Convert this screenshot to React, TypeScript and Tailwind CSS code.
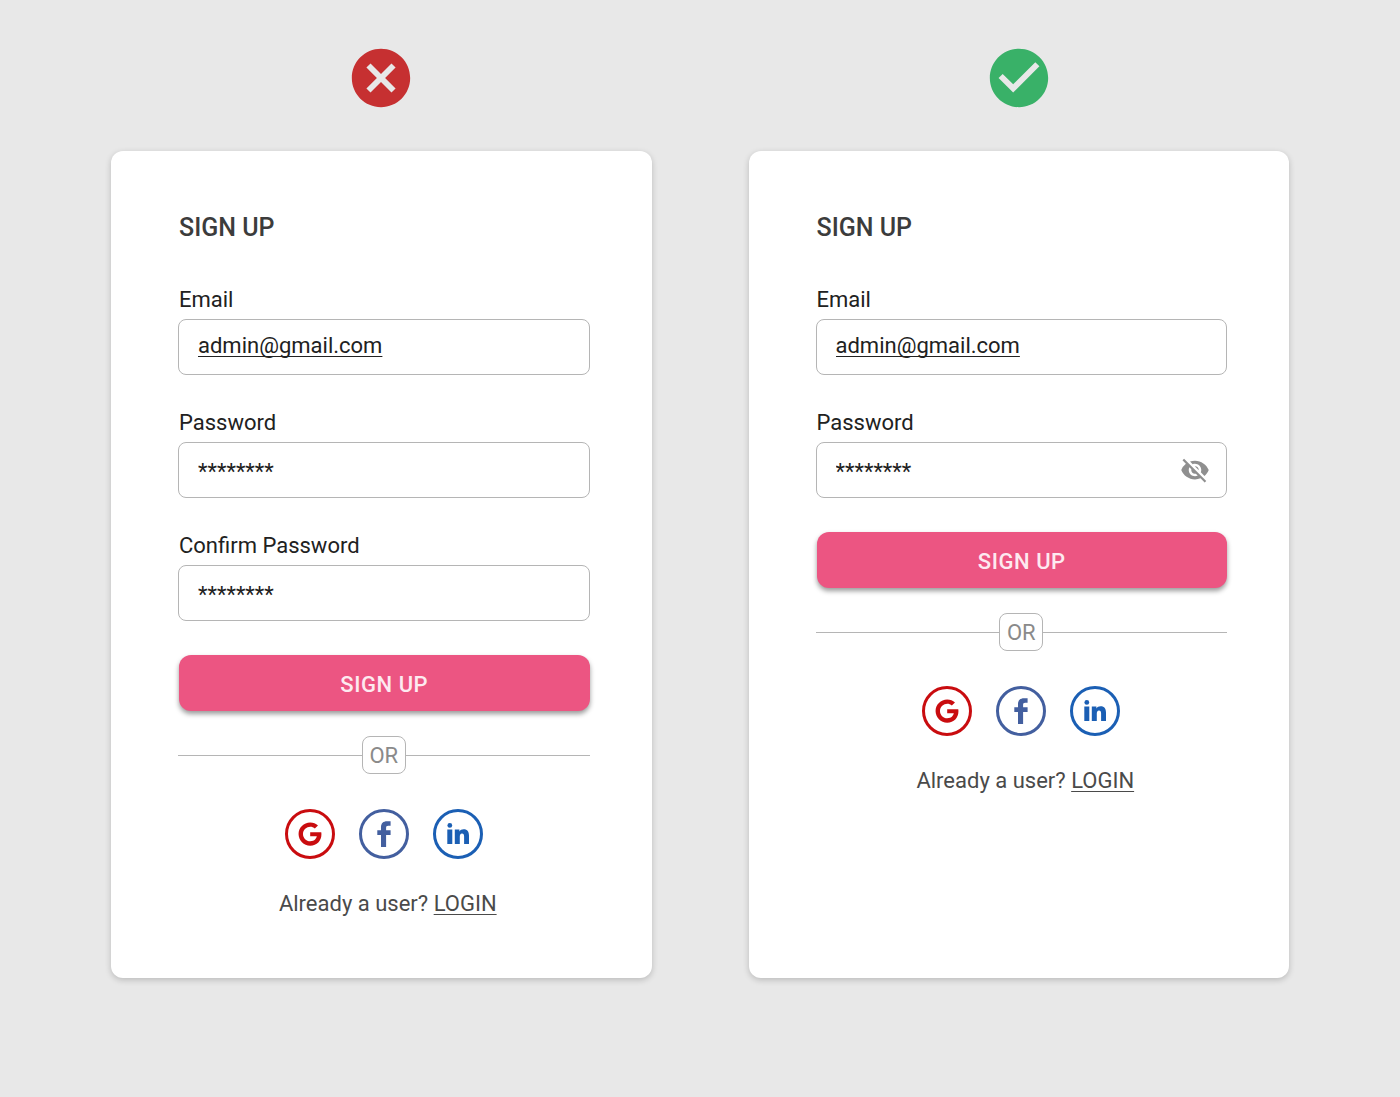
import { useId } from "react";
import { FaGoogle } from "react-icons/fa";
import { MdCancel, MdCheckCircle, MdVisibilityOff } from "react-icons/md";

type FieldProps = {
  label: string;
  value: string;
  type?: "text" | "email";
  hasToggle?: boolean;
};

function Field({ label, value, type = "text", hasToggle = false }: FieldProps) {
  const id = useId();

  return (
    <div>
      <label htmlFor={id} className="block pl-px text-[22px] leading-7 text-[#212121]">
        {label}
      </label>
      <div className="mt-[5px] flex h-14 items-center rounded-lg border border-[#b5b5b5] bg-white pl-[19px] pr-4">
        <input
          id={id}
          type={type}
          defaultValue={value}
          autoComplete="off"
          spellCheck={false}
          className={
            type === "email"
              ? "min-w-0 flex-1 pb-0.5 text-[22px] leading-7 text-[#212121] underline decoration-1 underline-offset-3 outline-none [text-decoration-skip-ink:none]"
              : "min-w-0 flex-1 pt-1 text-[22px] leading-7 text-[#212121] outline-none"
          }
        />
        {hasToggle ? (
          <button type="button" aria-label="Show password" className="text-[#8f8f8f]">
            <MdVisibilityOff size={30} />
          </button>
        ) : null}
      </div>
    </div>
  );
}

function FacebookMark() {
  return (
    <svg viewBox="0 0 14 26" className="h-[26px] w-3.5" fill="currentColor" aria-hidden="true">
      <path d="M4 26V14H.3V9.200H4v-3C4 2.200 6.200.2 10 .2h3.600v4.600h-2.400c-1.600 0-2.100.7-2.100 2.100v2.300h4.500V14H9.100v12z" />
    </svg>
  );
}

function LinkedInMark() {
  return (
    <svg viewBox="0 0 22 21" className="h-[21px] w-[22px]" fill="currentColor" aria-hidden="true">
      <circle cx="2.8" cy="2.4" r="2.4" />
      <path d="M.3 6.600h5V21h-5zM7.800 6.600h4.600v1.900c.8-1.400 2.300-2.200 4.200-2.200 4 0 5.400 2.500 5.400 6.300V21h-4.900v-7.400c0-2-.6-3.200-2.100-3.200-1.600 0-2.200 1.300-2.200 3.200V21h-5z" />
    </svg>
  );
}

function SocialLinks() {
  return (
    <div className="mt-[35px] flex justify-center gap-6">
      <a
        href="#google"
        aria-label="Sign up with Google"
        className="flex size-[50px] items-center justify-center rounded-full border-3 border-[#c90c0f] text-[#c90c0f]"
      >
        <FaGoogle size={24} />
      </a>
      <a
        href="#facebook"
        aria-label="Sign up with Facebook"
        className="flex size-[50px] items-center justify-center rounded-full border-3 border-[#435f9f] text-[#435f9f]"
      >
        <FacebookMark />
      </a>
      <a
        href="#linkedin"
        aria-label="Sign up with LinkedIn"
        className="flex size-[50px] items-center justify-center rounded-full border-3 border-[#1b5fb4] pb-0.5 text-[#1b5fb4]"
      >
        <LinkedInMark />
      </a>
    </div>
  );
}

type SignUpCardProps = {
  confirmPassword: boolean;
};

function SignUpCard({ confirmPassword }: SignUpCardProps) {
  return (
    <form
      onSubmit={(event) => event.preventDefault()}
      className="flex-1 rounded-xl bg-white pb-[58px] pl-[67px] pr-[62px] pt-[57px] shadow-[0_2px_6px_rgba(0,0,0,0.2)]"
    >
      <h2 className="pl-px text-[25px] font-medium leading-10 text-[#3c3c3c]">SIGN UP</h2>

      <div className="mt-[38px] space-y-[34px]">
        <Field label="Email" value="admin@gmail.com" type="email" />
        <Field label="Password" value="********" hasToggle={!confirmPassword} />
        {confirmPassword ? <Field label="Confirm Password" value="********" /> : null}
      </div>

      <div className="pl-px pt-[34px]">
        <button
          type="submit"
          className="h-14 w-full rounded-xl bg-[#ec5582] pt-1 text-[22px] font-medium leading-7 tracking-wide text-[#fdeaf0] shadow-[0_3px_5px_rgba(0,0,0,0.4)]"
        >
          SIGN UP
        </button>
      </div>

      <div className="mt-[25px] flex items-center">
        <div className="h-px flex-1 bg-[#b5b5b5]" />
        <span className="flex h-[38px] w-11 items-center justify-center rounded-lg border border-[#b5b5b5] pt-0.5 text-[22px] leading-7 text-[#8a8a8a]">
          OR
        </span>
        <div className="h-px flex-1 bg-[#b5b5b5]" />
      </div>

      <SocialLinks />

      <p className="mt-[31px] pl-2 text-center text-[22px] leading-7 text-[#4a4a4a]">
        Already a user?{" "}
        <a href="#login" className="underline decoration-1 underline-offset-3">
          LOGIN
        </a>
      </p>
    </form>
  );
}

export default function App() {
  return (
    <main className="grid min-h-screen grid-cols-2 gap-x-[97px] bg-[#e8e8e8] px-[111px] pb-[119px] pt-[43px] font-['Roboto',sans-serif]">
      <section className="flex flex-col">
        <MdCancel size={70} className="mb-[38px] self-center text-[#c63031]" aria-label="Avoid" />
        <SignUpCard confirmPassword />
      </section>
      <section className="flex flex-col">
        <MdCheckCircle size={70} className="mb-[38px] self-center text-[#39b168]" aria-label="Recommended" />
        <SignUpCard confirmPassword={false} />
      </section>
    </main>
  );
}
